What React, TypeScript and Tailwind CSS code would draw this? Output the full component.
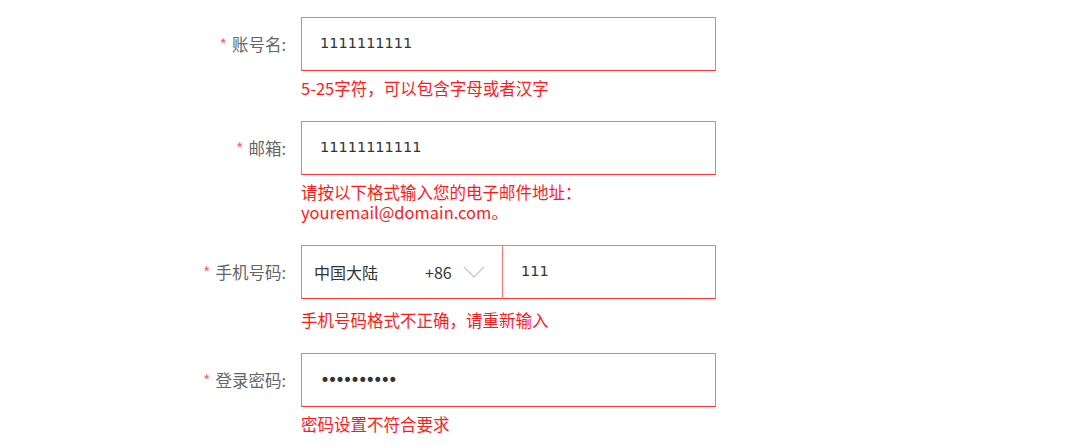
import { ReactNode } from 'react';

const cjk = "font-['Microsoft_YaHei','Noto_Sans_CJK_SC',sans-serif]";

interface FieldRowProps {
  label: string;
  error: ReactNode;
  errorGap?: string;
  children: ReactNode;
}

const FieldRow = ({ label, error, errorGap = 'mt-[7px]', children }: FieldRowProps) => (
  <div className="mb-[23px] flex">
    <div className="flex h-[54px] w-[301px] items-center justify-end pr-[15px] text-[16.5px] text-[#666]">
      <span className="mr-[5px] text-[16px] text-[#f56c6c]">*</span>
      <span>{label}:</span>
    </div>
    <div className="flex flex-col">
      {children}
      <div className={`${errorGap} w-[300px] text-[16.5px] leading-[20px] text-[#ff1a1a]`}>{error}</div>
    </div>
  </div>
);

const boxCls = 'h-[54px] border border-[#ff7575] border-b-[#f33] bg-white';
const valueCls = "font-['DejaVu_Sans'] text-[14.5px] text-[#333]";

export default function App() {
  return (
    <div className={`min-h-[448px] bg-white pt-[17px] ${cjk}`}>
      <FieldRow label="账号名" error="5-25字符，可以包含字母或者汉字">
        <div className={`${boxCls} flex w-[415px] items-center pl-[18px]`}>
          <span className={valueCls}>1111111111</span>
        </div>
      </FieldRow>

      <FieldRow
        label="邮箱"
        error={
          <>
            <div className="h-[20px]">请按以下格式输入您的电子邮件地址：</div>
            <div className="h-[20px]">youremail@domain.com。</div>
          </>
        }
      >
        <div className={`${boxCls} flex w-[415px] items-center pl-[18px]`}>
          <span className={valueCls}>11111111111</span>
        </div>
      </FieldRow>

      <FieldRow label="手机号码" error="手机号码格式不正确，请重新输入" errorGap="mt-[11px]">
        <div className="flex w-[415px]">
          <div className={`${boxCls} flex w-[202px] items-center pl-[12px] text-[16px] text-[#333]`}>
            <span>中国大陆</span>
            <span className="ml-[47px]">+86</span>
            <svg className="ml-[11px]" width="22" height="14" viewBox="0 0 22 14" fill="none">
              <path d="M1 2l10 10 10-10" stroke="#c8c8c8" strokeWidth="1.4" />
            </svg>
          </div>
          <div className={`${boxCls} -ml-px flex flex-1 items-center pl-[18px]`}>
            <span className={valueCls}>111</span>
          </div>
        </div>
      </FieldRow>

      <FieldRow label="登录密码" error="密码设置不符合要求">
        <div className={`${boxCls} flex w-[415px] items-center pl-[18px]`}>
          <span className="font-['DejaVu_Sans'] text-[17px] leading-none tracking-[-2.5px] text-[#333]">••••••••••</span>
        </div>
      </FieldRow>
    </div>
  );
}
